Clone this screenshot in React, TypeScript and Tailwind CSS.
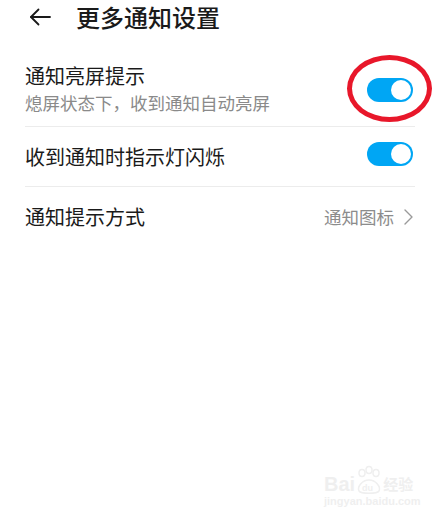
import { FC } from "react";

const Toggle: FC = () => (
  <div className="relative w-[46px] h-[24px] rounded-full bg-[#00a6f4] shrink-0">
    <div className="absolute right-[2px] top-[2px] w-[20px] h-[20px] rounded-full bg-white" />
  </div>
);

const App: FC = () => {
  return (
    <div
      className="relative w-[442px] h-[519px] bg-white overflow-hidden text-[#1a1a1a]"
      style={{ fontFamily: '"Noto Sans CJK SC", "Noto Sans", sans-serif' }}
    >
      {/* Header */}
      <div className="flex items-center h-[34px] pl-[29px]">
        <svg width="22" height="18" viewBox="0 0 22 18" fill="none" stroke="#1a1a1a" strokeWidth="1.8" strokeLinecap="round" strokeLinejoin="round">
          <path d="M21 9H2" />
          <path d="M9.5 1.5L2 9l7.5 7.5" />
        </svg>
        <div className="ml-[25px] text-[24px] leading-[34px] font-medium">更多通知设置</div>
      </div>

      {/* Rows */}
      <div className="ml-[25px] mr-[27px]">
        <div className="flex items-center justify-between pt-[29px] pb-[12px] border-b border-[#ececec]">
          <div className="flex flex-col">
            <div className="text-[20px] leading-[26px]">通知亮屏提示</div>
            <div className="mt-[3px] text-[17.5px] leading-[22px] text-[#8a8a8a]">熄屏状态下，收到通知自动亮屏</div>
          </div>
          <div className="mr-[2px] mt-[2px]">
            <Toggle />
          </div>
        </div>

        <div className="flex items-center justify-between h-[60px] border-b border-[#ececec]">
          <div className="text-[20px] leading-[26px]">收到通知时指示灯闪烁</div>
          <div className="mr-[2px] -mt-[5px]">
            <Toggle />
          </div>
        </div>

        <div className="flex items-center justify-between h-[60px]">
          <div className="text-[20px] leading-[26px]">通知提示方式</div>
          <div className="flex items-center gap-[10px] mr-[2px]">
            <span className="text-[17.5px] leading-[22px] text-[#8c8c8c]">通知图标</span>
            <svg width="9" height="16" viewBox="0 0 9 16" fill="none" stroke="#9a9a9a" strokeWidth="1.4" strokeLinecap="round" strokeLinejoin="round">
              <path d="M1 1l7 7-7 7" />
            </svg>
          </div>
        </div>
      </div>

      {/* Red annotation circle */}
      <div className="absolute left-[347px] top-[55px] w-[85px] h-[67px] rounded-[50%] border-[5px] border-[#e8172a]" />

      {/* Watermark */}
      <div className="absolute left-[324px] top-[465px] flex flex-col items-start text-[#efefef]">
        <div className="flex items-end">
          <span className="text-[20px] leading-[22px] font-bold" style={{ fontFamily: '"Liberation Sans", sans-serif' }}>Bai</span>
          <svg width="28" height="30" viewBox="0 0 28 30" fill="none" stroke="#efefef" strokeWidth="1.5">
            <ellipse cx="7" cy="8" rx="3" ry="3.5" />
            <ellipse cx="14" cy="5" rx="3" ry="3.5" />
            <ellipse cx="21" cy="8" rx="3" ry="3.5" />
            <path d="M4 26c-2-4 3-11 10-11s12 7 10 11c-2 3-18 3-20 0z" />
            <text x="7" y="26" fontSize="9" fill="#efefef" stroke="none" fontFamily="Liberation Sans, sans-serif" fontWeight="bold">du</text>
          </svg>
          <span className="text-[15px] leading-[22px] font-bold">经验</span>
        </div>
        <div className="text-[11px] leading-[13px] font-bold" style={{ fontFamily: '"Liberation Sans", sans-serif' }}>jingyan.baidu.com</div>
      </div>
    </div>
  );
};

export default App;
